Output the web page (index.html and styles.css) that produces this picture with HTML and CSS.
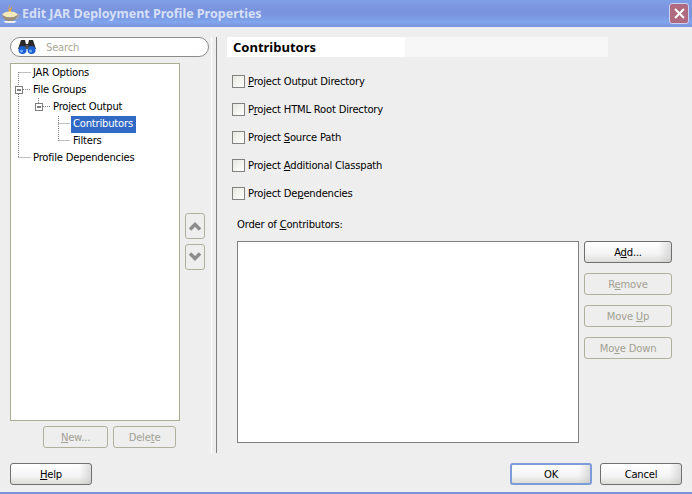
FILE: index.html
```html
<!DOCTYPE html>
<html lang="en">
<head>
<meta charset="utf-8">
<title>Edit JAR Deployment Profile Properties</title>
<link rel="stylesheet" href="styles.css">
</head>
<body>
<div class="dialog">
  <header class="titlebar">
    <svg class="app-icon" width="20" height="20" viewBox="0 0 20 20">
      <path d="M8 1c2 1-1 2 1 4 1-1 2-1 1-3 2 1 1 3 0 4v2H8C7 4 8 3 8 1z" fill="#eda52e"/>
      <ellipse cx="9" cy="10.500" rx="7.500" ry="3" fill="#f6e9b8"/>
      <path d="M1.500 10.500c0 4 3 6.500 7.500 6.500s7.500-2.500 7.500-6.500c-1 2-4 3-7.500 3s-6.500-1-7.500-3z" fill="#9c8f78"/>
      <path d="M2.500 17h13l-2 2H4.500z" fill="#efefef"/>
      <path d="M16 10.500c3-.5 3 3-1 4" fill="none" stroke="#c9b98f" stroke-width="1"/>
    </svg>
    <h1 class="title">Edit JAR Deployment Profile Properties</h1>
    <button class="close" aria-label="Close">
      <svg width="13" height="13" viewBox="0 0 13 13"><path d="M2 2l9 9M11 2l-9 9" stroke="#fff" stroke-width="2" fill="none"/></svg>
    </button>
  </header>
  <main class="main">
    <aside class="left">
      <div class="search">
        <svg class="binoc" width="18" height="16" viewBox="0 0 18 16">
          <path d="M3 1h4l1 4h2l1-4h4l3 9H0z" fill="#2a2a2a"/>
          <circle cx="4.500" cy="11" r="4" fill="#1d5fd0"/>
          <circle cx="13.500" cy="11" r="4" fill="#1d5fd0"/>
          <rect x="7.500" y="6" width="3" height="4" fill="#555"/>
          <circle cx="3.500" cy="12" r="1.500" fill="#6fb0ff"/>
          <circle cx="12.500" cy="12" r="1.500" fill="#6fb0ff"/>
        </svg>
        <span class="search-text">Search</span>
      </div>
      <div class="tree">
        <svg class="tree-lines" width="80" height="110" viewBox="0 0 80 110">
          <path class="dots" d="M7.500 8v86M7.500 8.500H20M12 25.500h8M7.500 93.500H20M27.500 34v5M32 42.500h8M47.500 52v25M47.500 59.500H59M47.500 76.500H59"/>
          <rect x="4.500" y="22.500" width="7" height="7" class="box"/>
          <path d="M6 26h4" class="minus"/>
          <rect x="24.500" y="39.500" width="7" height="7" class="box"/>
          <path d="M26 43h4" class="minus"/>
        </svg>
        <div class="row lvl0">JAR Options</div>
        <div class="row lvl0">File Groups</div>
        <div class="row lvl1">Project Output</div>
        <div class="row lvl2"><span class="selected">Contributors</span></div>
        <div class="row lvl2"><span class="leaf">Filters</span></div>
        <div class="row lvl0">Profile Dependencies</div>
      </div>
      <div class="tree-actions">
        <button class="btn off new"><u>N</u>ew...</button>
        <button class="btn off del">Dele<u>t</u>e</button>
      </div>
    </aside>
    <div class="movers">
      <button class="mover" aria-label="Up"><svg width="16" height="12" viewBox="0 0 16 12"><path d="M3 9.500L8 4.500 13 9.500" class="chev"/></svg></button>
      <button class="mover" aria-label="Down"><svg width="16" height="12" viewBox="0 0 16 12"><path d="M3 2.500L8 7.500 13 2.500" class="chev"/></svg></button>
    </div>
    <section class="right">
      <div class="heading"><h2 class="heading-text">Contributors</h2></div>
      <ul class="checks">
        <li class="check"><span class="checkbox"></span><span><u>P</u>roject Output Directory</span></li>
        <li class="check"><span class="checkbox"></span><span>P<u>r</u>oject HTML Root Directory</span></li>
        <li class="check"><span class="checkbox"></span><span>Project <u>S</u>ource Path</span></li>
        <li class="check"><span class="checkbox"></span><span>Project <u>A</u>dditional Classpath</span></li>
        <li class="check"><span class="checkbox"></span><span>Project De<u>p</u>endencies</span></li>
      </ul>
      <div class="order-label">Order of <u>C</u>ontributors:</div>
      <div class="order">
        <div class="listbox"></div>
        <div class="order-actions">
          <button class="btn on">A<u>d</u>d...</button>
          <button class="btn off">R<u>e</u>move</button>
          <button class="btn off">Move <u>U</u>p</button>
          <button class="btn off">Mo<u>v</u>e Down</button>
        </div>
      </div>
    </section>
  </main>
  <footer class="footer">
    <button class="btn on wide"><u>H</u>elp</button>
    <div class="footer-right">
      <button class="btn on wide default">OK</button>
      <button class="btn on wide">Cancel</button>
    </div>
  </footer>
</div>
</body>
</html>
```
FILE: styles.css
```css
* { box-sizing: border-box; }
html, body { margin: 0; padding: 0; }
body { width: 692px; height: 494px; overflow: hidden; background: #eeeeee; }
.dialog {
  width: 692px; height: 494px; display: flex; flex-direction: column;
  background: #eeeeee; border-bottom: 2px solid #7b92dc;
  font: 10px/14px "DejaVu Sans", sans-serif; color: #000; letter-spacing: -0.2px;
}
u { text-underline-offset: 1px; }
button { font: inherit; letter-spacing: inherit; padding: 0; margin: 0; }
.titlebar {
  height: 27px; flex: none; display: flex; align-items: center; padding: 0 3px 0 1px;
  background: linear-gradient(#7b9fe6 0, #7f9ce4 2px, #7a94de 10px, #7a96e0 16px, #80a6ee 22px, #7b93dd 27px);
}
.app-icon { flex: none; margin-right: 1px; }
.title { margin: 0; flex: 1; font: bold 12.5px/27px "Noto Sans", sans-serif; letter-spacing: 0; color: #d6e0f8; }
.close {
  width: 20px; height: 21px; border: 1px solid #c9d2f2; border-radius: 3px; background: #b06a80;
  display: flex; align-items: center; justify-content: center;
}
.close svg { display: block; }
.main { height: 426px; flex: none; display: flex; padding: 10px 0 0 10px; }
.left { width: 199px; flex: none; display: flex; flex-direction: column; }
.search {
  height: 20px; flex: none; display: flex; align-items: center; gap: 10px; padding-left: 7px;
  background: #fff; border: 1px solid #8c8c8c; border-radius: 10px;
}
.binoc { flex: none; }
.search-text { color: #a8a898; padding-top: 1px; }
.tree {
  position: relative; width: 170px; height: 358px; margin-top: 6px; flex: none; padding-top: 1px;
  background: #fff; border: 1px solid #acab95;
}
.tree-lines { position: absolute; left: 0; top: 0; }
.dots { fill: none; stroke: #808080; stroke-dasharray: 1 1; }
.box { fill: #fff; stroke: #7f7f7f; }
.minus { stroke: #000; fill: none; }
.row { height: 17px; line-height: 16px; white-space: nowrap; }
.lvl0 { padding-left: 22px; }
.lvl1 { padding-left: 42px; }
.lvl2 { padding-left: 60px; }
.selected { display: inline-block; height: 17px; padding: 0 3px 0 2px; background: #316ac5; color: #fff; }
.leaf { display: inline-block; padding: 0 2px; }
.tree-actions { display: flex; gap: 5px; margin: 5px 0 0 33px; }
.new { width: 65px; }
.del { width: 63px; }
.btn {
  height: 22px; padding-top: 1px; border-radius: 3px; display: block; text-align: center; line-height: 18px; color: #000;
}
.off { border: 1px solid #b1b09c; background: #eeeeee; color: #a1a192; }
.on {
  border: 1px solid #6f6f6f;
  background: linear-gradient(90deg, rgba(255,255,255,0) 0, rgba(255,255,255,0) 85%, rgba(190,190,190,.5) 100%), linear-gradient(#fff, #f4f4f4 60%, #dcdcd8);
}
.default { border: 2px solid #7c9bd8; line-height: 16px; }
.wide { width: 82px; }
.movers { width: 31px; flex: none; display: flex; flex-direction: column; gap: 5px; padding: 176px 0 0 0; margin-left: -24px; }
.mover {
  width: 20px; height: 26px; border: 1px solid #b1b09c; border-radius: 3px; background: #eeeeee;
  display: flex; align-items: center; justify-content: center;
}
.chev { fill: none; stroke: #8c8c8c; stroke-width: 3.5; }
.right {
  position: relative; flex: 1; display: flex; flex-direction: column; padding-left: 10px;
  border-left: 1px solid #808080;
}
.right::before { content: ""; position: absolute; left: -6px; top: 0; bottom: 0; width: 1px; background: #fff; }
.heading { width: 381px; height: 20px; background: #f7f7f7; }
.heading-text {
  margin: 0; width: 178px; height: 20px; padding-left: 6px; background: #fff;
  font: bold 13px/20px "Noto Sans", sans-serif; letter-spacing: 0;
}
.checks { list-style: none; margin: 18px 0 0 5px; padding: 0; display: flex; flex-direction: column; gap: 14px; }
.check { height: 14px; display: flex; align-items: center; gap: 3px; }
.checkbox { width: 13px; height: 13px; flex: none; margin-top: -1px; border: 1px solid #808080; background: linear-gradient(135deg, #e6e6e0, #fff); }
.order-label { margin: 17px 0 0 10px; }
.order { display: flex; margin: 9px 0 0 10px; gap: 5px; }
.listbox { width: 342px; height: 202px; background: #fff; border: 1px solid #808080; }
.order-actions { display: flex; flex-direction: column; gap: 10px; }
.order-actions .btn { width: 88px; }
.footer { flex: 1; display: flex; justify-content: space-between; padding: 10px 10px 0; }
.footer-right { display: flex; gap: 8px; }
```
